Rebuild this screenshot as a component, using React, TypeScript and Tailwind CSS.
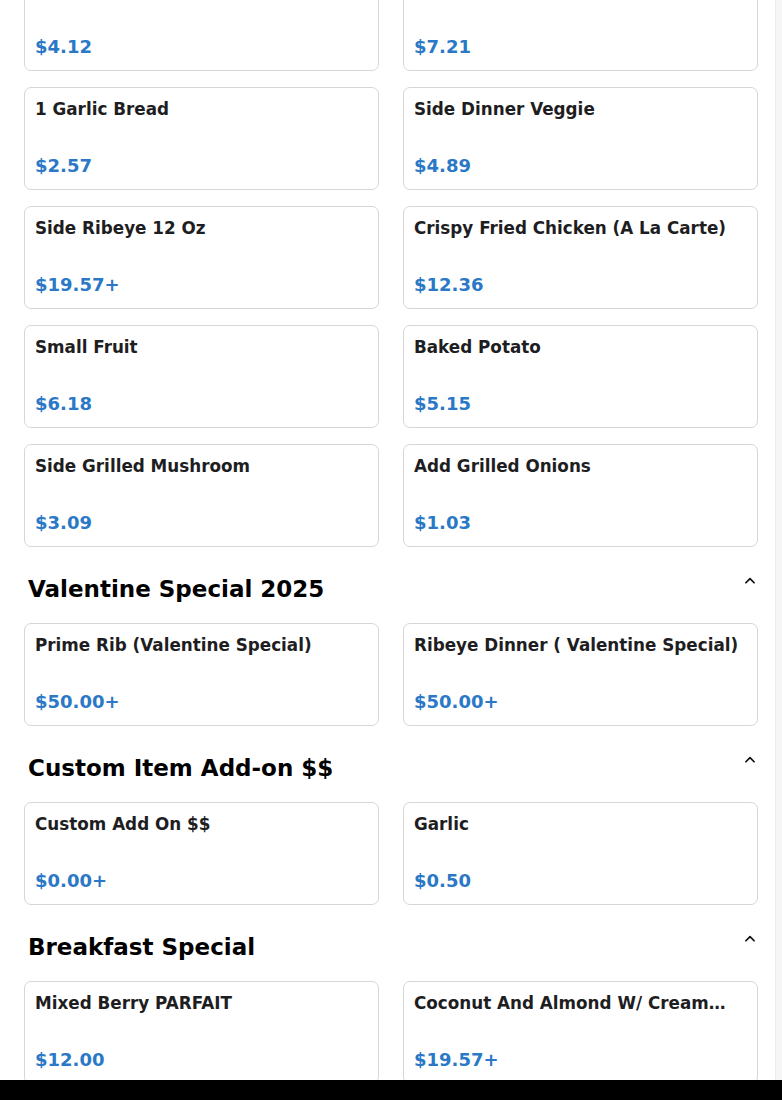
import React from "react";

type Item = { name: string; price: string };

const Chevron = () => (
  <svg width="14" height="14" viewBox="0 0 24 24" fill="none" stroke="#111" strokeWidth="3" strokeLinecap="round" strokeLinejoin="round">
    <path d="M5 15l7-7 7 7" />
  </svg>
);

const Card = ({ item }: { item: Item }) => (
  <div className="h-[103px] rounded-[7px] border border-[#d6d6d6] bg-white px-[10px] pt-[10px] flex flex-col justify-between pb-[12px] min-w-0">
    <div className="text-[16.8px] leading-[22px] font-bold text-[#1e1e22] truncate">{item.name}</div>
    <div className="text-[18px] leading-[22px] font-bold text-[#2a78c6]">{item.price}</div>
  </div>
);

const Grid = ({ items }: { items: Item[] }) => (
  <div className="grid grid-cols-2 gap-x-[24px] gap-y-[16px]">
    {items.map((it, i) => (
      <Card key={i} item={it} />
    ))}
  </div>
);

const Section = ({ title, items }: { title: string; items: Item[] }) => (
  <div>
    <div className="flex items-center justify-between pl-[4px] pr-[1px] h-[76px]">
      <h2 className="text-[23px] font-bold text-black leading-none mt-[8px]">{title}</h2>
      <div className="-mt-[8px]"><Chevron /></div>
    </div>
    <Grid items={items} />
  </div>
);

export default function App() {
  const top: Item[] = [
    { name: "Side Caesar Salad", price: "$4.12" },
    { name: "Side Cranberry", price: "$7.21" },
    { name: "1 Garlic Bread", price: "$2.57" },
    { name: "Side Dinner Veggie", price: "$4.89" },
    { name: "Side Ribeye 12 Oz", price: "$19.57+" },
    { name: "Crispy Fried Chicken (A La Carte)", price: "$12.36" },
    { name: "Small Fruit", price: "$6.18" },
    { name: "Baked Potato", price: "$5.15" },
    { name: "Side Grilled Mushroom", price: "$3.09" },
    { name: "Add Grilled Onions", price: "$1.03" },
  ];
  return (
    <div
      className="w-[782px] h-[1100px] flex flex-col overflow-hidden bg-white"
      style={{ fontFamily: '"DejaVu Sans", "Noto Sans", sans-serif' }}
    >
      <div className="flex-1 flex min-h-0">
        <div className="flex-1 overflow-hidden pl-[24px] pr-[17px]">
          <div className="-mt-[32px]">
            <Grid items={top} />
            <Section
              title="Valentine Special 2025"
              items={[
                { name: "Prime Rib (Valentine Special)", price: "$50.00+" },
                { name: "Ribeye Dinner ( Valentine Special)", price: "$50.00+" },
              ]}
            />
            <Section
              title="Custom Item Add-on $$"
              items={[
                { name: "Custom Add On $$", price: "$0.00+" },
                { name: "Garlic", price: "$0.50" },
              ]}
            />
            <Section
              title="Breakfast Special"
              items={[
                { name: "Mixed Berry PARFAIT", price: "$12.00" },
                { name: "Coconut And Almond W/ Cream…", price: "$19.57+" },
              ]}
            />
          </div>
        </div>
        <div className="w-[7px] bg-[#f6f6f6] border-l border-[#ececec]" />
      </div>
      <div className="h-[20px] bg-black" />
    </div>
  );
}
